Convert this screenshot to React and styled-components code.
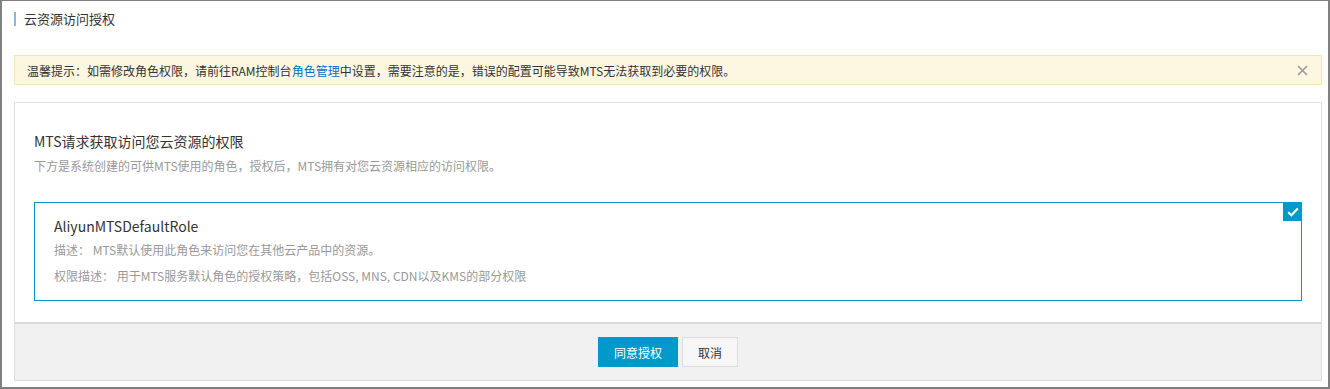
import styled, { createGlobalStyle } from "styled-components";

const GlobalStyle = createGlobalStyle`
  html, body {
    margin: 0;
    padding: 0;
    background: #fff;
  }
  body {
    font-family: "Noto Sans CJK SC", "Open Sans", sans-serif;
    color: #333;
  }
  * {
    box-sizing: border-box;
  }
`;

const Frame = styled.div`
  width: 1330px;
  height: 389px;
  border: 2px solid #808080;
  border-top-width: 1px;
  background: #fff;
  padding: 11px 6px 0 12px;
  display: flex;
  flex-direction: column;
`;

const PageTitle = styled.h1`
  margin: 0;
  height: 14px;
  display: flex;
  align-items: center;
  gap: 8px;
  font-size: 13px;
  font-weight: normal;
  line-height: 14px;
  color: #333;

  &::before {
    content: "";
    width: 2px;
    height: 14px;
    background: #88b8e0;
  }
`;

const Notice = styled.div`
  margin-top: 29px;
  height: 30px;
  width: 1308px;
  border: 1px solid #f6e6bd;
  background: #fdf7e1;
  display: flex;
  align-items: center;
  justify-content: space-between;
  padding: 0 13px 0 12px;
  font-size: 12px;
  color: #333;
`;

const NoticeLink = styled.a`
  color: #0070cc;
  text-decoration: none;
`;

const CloseButton = styled.button`
  border: 0;
  background: transparent;
  padding: 0;
  width: 12px;
  height: 12px;
  display: flex;
  align-items: center;
  justify-content: center;
  cursor: pointer;
`;

const Panel = styled.section`
  margin-top: 17px;
  width: 1308px;
  height: 279px;
  border: 1px solid #ddd;
  display: flex;
  flex-direction: column;
`;

const PanelBody = styled.div`
  flex: 1;
  padding: 28px 19px 0 19px;
`;

const Heading = styled.h2`
  margin: 0;
  font-size: 14px;
  font-weight: normal;
  line-height: 20px;
  color: #333;
`;

const SubText = styled.p`
  margin: 5px 0 0;
  font-size: 12px;
  line-height: 20px;
  color: #999;
`;

const RoleCard = styled.div`
  position: relative;
  margin-top: 26px;
  height: 99px;
  border: 1px solid #0b95c9;
  padding: 13px 19px 0;
`;

const CheckBadge = styled.span`
  position: absolute;
  top: -1px;
  right: -1px;
  width: 19px;
  height: 19px;
  background: #0099cc;
  display: flex;
  align-items: center;
  justify-content: center;
`;

const RoleName = styled.div`
  font-size: 14px;
  line-height: 20px;
  color: #333;
`;

const RoleLine = styled.div`
  margin-top: ${(p) => p.gap}px;
  font-size: 12px;
  line-height: 20px;
  color: #999;
`;

const Footer = styled.div`
  height: 58px;
  border-top: 2px solid #dcdcdc;
  background: #f1f1f1;
  display: flex;
  align-items: center;
  justify-content: center;
  gap: 4px;
`;

const Button = styled.button`
  height: 30px;
  padding: 0;
  width: ${(p) => (p.primary ? 80 : 56)}px;
  border: 1px solid ${(p) => (p.primary ? "#0099cc" : "#ddd")};
  background: ${(p) => (p.primary ? "#0099cc" : "#f7f7f7")};
  color: ${(p) => (p.primary ? "#fff" : "#333")};
  font-family: inherit;
  font-size: 12px;
  cursor: pointer;
`;

export default function App() {
  return (
    <>
      <GlobalStyle />
      <Frame>
        <PageTitle>云资源访问授权</PageTitle>
        <Notice>
          <span>
            温馨提示：如需修改角色权限，请前往RAM控制台
            <NoticeLink href="#">角色管理</NoticeLink>
            中设置，需要注意的是，错误的配置可能导致MTS无法获取到必要的权限。
          </span>
          <CloseButton aria-label="关闭">
            <svg width="11" height="11" viewBox="0 0 11 11">
              <path
                d="M1 1L10 10M10 1L1 10"
                stroke="#999"
                strokeWidth="1.6"
                fill="none"
              />
            </svg>
          </CloseButton>
        </Notice>
        <Panel>
          <PanelBody>
            <Heading>MTS请求获取访问您云资源的权限</Heading>
            <SubText>
              下方是系统创建的可供MTS使用的角色，授权后，MTS拥有对您云资源相应的访问权限。
            </SubText>
            <RoleCard>
              <CheckBadge>
                <svg width="12" height="10" viewBox="0 0 12 10">
                  <path
                    d="M1.2 5.2L4.4 8.2L10.8 1.6"
                    stroke="#fff"
                    strokeWidth="2.2"
                    fill="none"
                  />
                </svg>
              </CheckBadge>
              <RoleName>AliyunMTSDefaultRole</RoleName>
              <RoleLine gap={4}>描述： MTS默认使用此角色来访问您在其他云产品中的资源。</RoleLine>
              <RoleLine gap={6}>
                权限描述： 用于MTS服务默认角色的授权策略，包括OSS, MNS, CDN以及KMS的部分权限
              </RoleLine>
            </RoleCard>
          </PanelBody>
          <Footer>
            <Button primary>同意授权</Button>
            <Button>取消</Button>
          </Footer>
        </Panel>
      </Frame>
    </>
  );
}
